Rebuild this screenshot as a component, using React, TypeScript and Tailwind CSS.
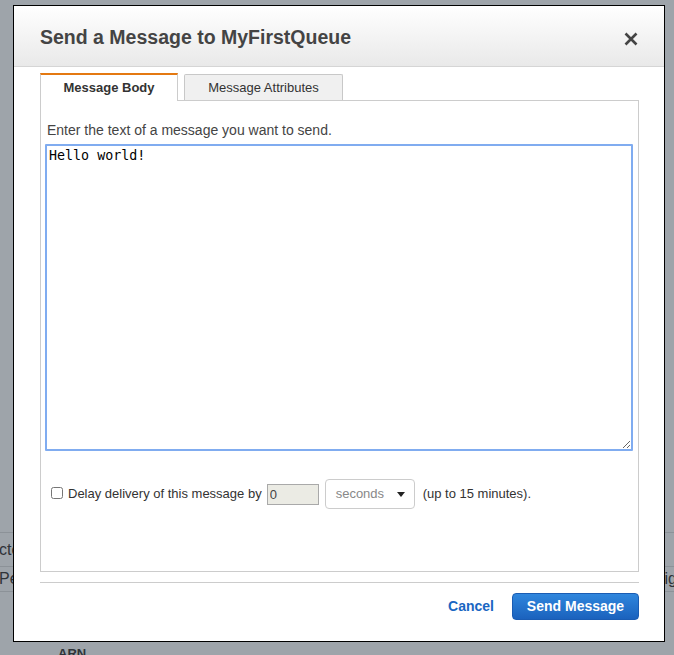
import React, { useState } from 'react'

const App: React.FC = () => {
  const [body, setBody] = useState('Hello world!')
  const [delay, setDelay] = useState('0')
  const [tab, setTab] = useState<'body' | 'attrs'>('body')

  return (
    <div className="relative w-[674px] h-[655px] overflow-hidden bg-[#9ea4aa] font-['Liberation_Sans',Arial,sans-serif]">
      {/* page behind the overlay */}
      <div className="pt-[532px] text-[16px] text-[#2f3338]">
        <div className="flex justify-between h-[35px] border-t border-b border-[#8c9298] items-center">
          <span className="-ml-[1px]">cte</span>
          <span />
        </div>
        <div className="flex justify-between h-[25px] border-b border-[#8c9298] items-center">
          <span className="-ml-[1px]">Pe</span>
          <span className="-mr-[3px]">ig</span>
        </div>
        <div className="pl-[58px] pt-[52px] text-[13px] font-bold">ARN</div>
      </div>

      {/* modal */}
      <div className="absolute left-[13px] top-[5px] w-[652px] h-[637px] bg-white border border-black flex flex-col">
        <div className="h-[61px] flex items-center justify-between pl-[26px] pr-[26px] pt-[4px] bg-gradient-to-b from-white to-[#e9e9e9] border-b border-[#d5d5d5]">
          <h1 className="text-[19.5px] font-bold text-[#444]">Send a Message to MyFirstQueue</h1>
          <button type="button" className="text-[#444] mt-[1px]">
            <svg width="14" height="14" viewBox="0 0 14 14">
              <path d="M1.5 1.5 L12.5 12.5 M12.5 1.5 L1.5 12.5" stroke="#444" strokeWidth="2.6" />
            </svg>
          </button>
        </div>

        <div className="pl-[26px] pr-[25px] pt-[5px] flex flex-col">
          <div className="flex items-end gap-[6px] h-[28px]">
            <button
              type="button"
              onClick={() => setTab('body')}
              className="relative -mb-[1px] w-[138px] h-[28px] bg-white border-t-2 border-t-[#e47911] border-x border-x-[#ccc] text-[13px] font-bold text-[#333] z-10"
            >
              Message Body
            </button>
            <button
              type="button"
              onClick={() => setTab('attrs')}
              className="w-[159px] h-[26px] bg-[#f0f0f0] border border-[#c8c8c8] border-b-0 rounded-t-[2px] text-[13px] text-[#333]"
            >
              Message Attributes
            </button>
          </div>

          <div className="h-[472px] border border-[#ccc] pl-[4px] pr-[5px] pt-[21px]">
            <p className="text-[14px] text-[#444] pl-[2px] leading-[16px]">Enter the text of a message you want to send.</p>
            <textarea
              value={tab === 'body' ? body : body}
              onChange={e => setBody(e.target.value)}
              className="mt-[6px] block w-[588px] h-[307px] border-2 border-[#80acf0] rounded-[1px] px-[2px] py-[1px] text-[13.33px] leading-[18px] text-black font-['DejaVu_Sans_Mono',monospace] outline-none resize-y"
            />

            <div className="mt-[28px] flex items-center pl-[6px] text-[13px] text-[#333]">
              <input type="checkbox" className="w-[12px] h-[12px] mr-[5px] mt-[-2px] accent-[#888]" />
              <span>Delay delivery of this message by</span>
              <input
                value={delay}
                onChange={e => setDelay(e.target.value)}
                className="ml-[5px] w-[52px] h-[21px] bg-[#ebebe4] border border-[#a9a9a9] px-[2px] text-[13px] text-[#444] outline-none"
              />
              <div className="ml-[6px] w-[90px] h-[30px] border border-[#ccc] rounded-[4px] flex items-center justify-between pl-[10px] pr-[9px] text-[#888]">
                <span>seconds</span>
                <svg width="8" height="5" viewBox="0 0 8 5">
                  <path d="M0 0 H8 L4 5 Z" fill="#222" />
                </svg>
              </div>
              <span className="ml-[8px]">(up to 15 minutes).</span>
            </div>
          </div>

          <div className="mt-[10px] border-t border-[#ccc] pt-[10px] flex justify-end items-center">
            <button type="button" className="text-[14px] font-bold text-[#1a66c2] mr-[18px]">Cancel</button>
            <button
              type="button"
              className="w-[127px] h-[27px] rounded-[4px] bg-gradient-to-b from-[#2f86dd] to-[#1b62bd] border border-[#1a5cb3] text-white text-[14px] font-bold"
            >
              Send Message
            </button>
          </div>
        </div>
      </div>
    </div>
  )
}

export default App
